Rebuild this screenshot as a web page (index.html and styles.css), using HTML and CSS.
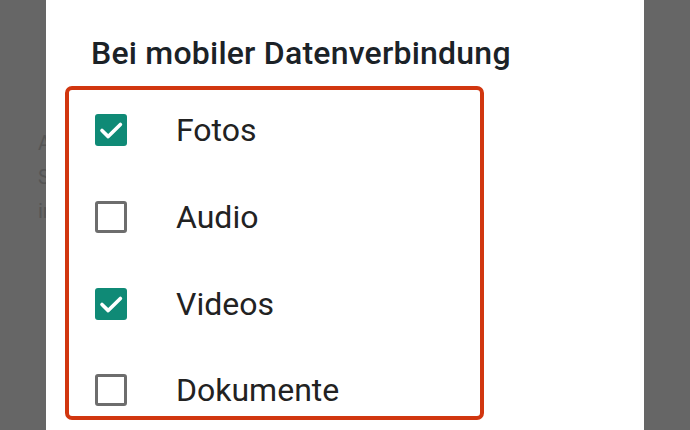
FILE: index.html
```html
<!DOCTYPE html>
<html lang="de">
<head>
<meta charset="utf-8">
<title>Bei mobiler Datenverbindung</title>
<link rel="stylesheet" href="styles.css">
</head>
<body>
<div class="backdrop">
  <p class="bg-line">Automatischer Download</p>
  <p class="bg-line">Sprachnachrichten werden</p>
  <p class="bg-line">immer automatisch geladen</p>
</div>
<div class="dialog">
  <h1 class="title">Bei mobiler Datenverbindung</h1>
  <div class="highlight">
    <ul class="options">
      <li class="option">
        <span class="box checked"><svg viewBox="0 0 32 32" width="32" height="32"><path d="M7 16.5 L13.2 22.6 L25.4 10.4" fill="none" stroke="#fff" stroke-width="3.6" stroke-linecap="round" stroke-linejoin="round"/></svg></span>
        <span class="label">Fotos</span>
      </li>
      <li class="option">
        <span class="box"></span>
        <span class="label">Audio</span>
      </li>
      <li class="option">
        <span class="box checked"><svg viewBox="0 0 32 32" width="32" height="32"><path d="M7 16.5 L13.2 22.6 L25.4 10.4" fill="none" stroke="#fff" stroke-width="3.6" stroke-linecap="round" stroke-linejoin="round"/></svg></span>
        <span class="label">Videos</span>
      </li>
      <li class="option">
        <span class="box"></span>
        <span class="label">Dokumente</span>
      </li>
    </ul>
  </div>
</div>
</body>
</html>
```

FILE: styles.css
```css
html, body {
  margin: 0;
  padding: 0;
}
body {
  width: 690px;
  height: 430px;
  overflow: hidden;
  position: relative;
  background: #666666;
  font-family: Roboto, "Noto Sans", "Liberation Sans", sans-serif;
}
.backdrop {
  padding: 130px 0 0 38px;
}
.bg-line {
  margin: 0 0 8px 0;
  font-size: 20px;
  line-height: 26px;
  color: #555555;
  white-space: nowrap;
}
.dialog {
  position: absolute;
  left: 46px;
  top: 0;
  width: 598px;
  height: 430px;
  background: #ffffff;
  box-sizing: border-box;
  padding-top: 34px;
}
.title {
  margin: 0 0 0 45px;
  font-size: 32px;
  line-height: 38px;
  font-weight: 500;
  color: #1b2227;
  letter-spacing: 0.22px;
}
.highlight {
  margin: 14px 0 0 19px;
  width: 419px;
  height: 334px;
  box-sizing: border-box;
  border: 4px solid #d1360f;
  border-radius: 7px;
  overflow: hidden;
}
.options {
  list-style: none;
  margin: -3px 0 0 0;
  padding: 0;
}
.option {
  display: flex;
  align-items: center;
  height: 86.67px;
  padding-left: 26px;
}
.box {
  width: 32px;
  height: 32px;
  box-sizing: border-box;
  border: 3.3px solid #6d6d6d;
  border-radius: 3px;
  flex: none;
}
.box.checked {
  border: none;
  background: #0f8a76;
  border-radius: 3px;
}
.box svg {
  display: block;
}
.label {
  margin-left: 49px;
  font-size: 32px;
  color: #222222;
  line-height: 40px;
}
```
